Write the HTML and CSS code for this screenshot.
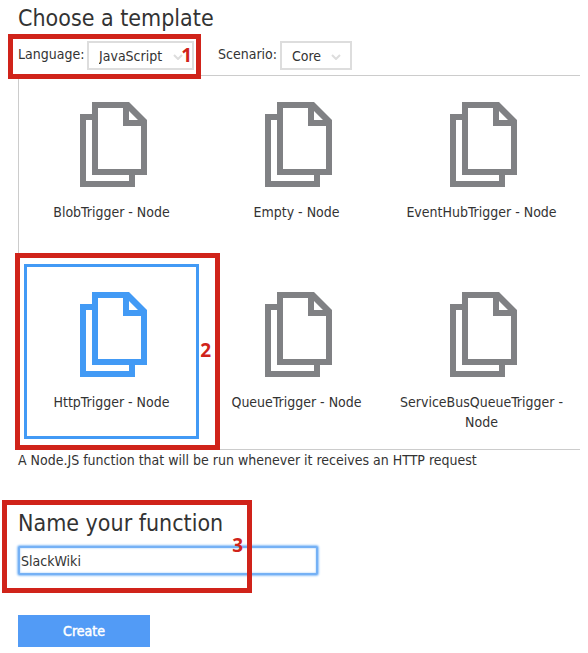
FILE: index.html
```html
<!DOCTYPE html>
<html lang="en">
<head>
<meta charset="utf-8">
<meta name="viewport" content="width=device-width, initial-scale=1">
<title>Choose a template</title>
<link rel="stylesheet" href="styles.css">
</head>
<body>
<svg class="sprite" aria-hidden="true">
  <symbol id="pages" viewBox="0 0 67 85">
    <path fill-rule="evenodd" d="M12 0H49L67 18V73H12ZM18 6V67H61V24H43V6ZM49 9V18H58Z"/>
    <path d="M0 12H12V18H6V79H49V73H55V85H0Z"/>
  </symbol>
</svg>
<main class="page">
  <h1 class="title">Choose a template</h1>
  <div class="filters">
    <div class="filter marked">
      <label for="language">Language:</label>
      <span class="picker picker-wide">
        <select id="language"><option>JavaScript</option></select>
        <svg class="chevron" viewBox="0 0 10 6" aria-hidden="true"><path d="M1 1l4 4 4-4"/></svg>
      </span>
      <span class="mark mark-language"><b class="step">1</b></span>
    </div>
    <div class="filter">
      <label for="scenario">Scenario:</label>
      <span class="picker">
        <select id="scenario"><option>Core</option></select>
        <svg class="chevron" viewBox="0 0 10 6" aria-hidden="true"><path d="M1 1l4 4 4-4"/></svg>
      </span>
    </div>
  </div>
  <div class="templates">
    <button type="button" class="tile"><svg class="icon" aria-hidden="true"><use href="#pages"/></svg><span>BlobTrigger - Node</span></button>
    <button type="button" class="tile"><svg class="icon" aria-hidden="true"><use href="#pages"/></svg><span>Empty - Node</span></button>
    <button type="button" class="tile"><svg class="icon" aria-hidden="true"><use href="#pages"/></svg><span>EventHubTrigger - Node</span></button>
    <div class="marked">
      <button type="button" class="tile selected"><svg class="icon" aria-hidden="true"><use href="#pages"/></svg><span>HttpTrigger - Node</span></button>
      <span class="mark mark-template"><b class="step">2</b></span>
    </div>
    <button type="button" class="tile"><svg class="icon" aria-hidden="true"><use href="#pages"/></svg><span>QueueTrigger - Node</span></button>
    <button type="button" class="tile"><svg class="icon" aria-hidden="true"><use href="#pages"/></svg><span>ServiceBusQueueTrigger - Node</span></button>
  </div>
  <p class="description">A Node.JS function that will be run whenever it receives an HTTP request</p>
  <div class="naming marked">
    <label class="title" for="name">Name your function</label>
    <input class="name" id="name" type="text" value="SlackWiki">
    <span class="mark mark-name"><b class="step">3</b></span>
  </div>
  <button type="button" class="create">Create</button>
</main>
</body>
</html>
```
FILE: styles.css
```css
* {
  box-sizing: border-box;
}

body {
  margin: 0;
  background: #fff;
  color: #333;
  font: 14px/20px "DejaVu Sans Condensed", "Noto Sans", sans-serif;
}

button,
input,
select {
  margin: 0;
  color: inherit;
  font: inherit;
}

.sprite {
  position: absolute;
  width: 0;
  height: 0;
}

.page {
  padding: 0 8px 0 18px;
}

.title {
  display: block;
  margin: 0;
  font-size: 23px;
  font-weight: 400;
  line-height: 36px;
}

.filters {
  display: flex;
  gap: 24px;
  padding: 5px 0;
}

.filter {
  display: flex;
  gap: 5px;
  line-height: 26px;
}

.filter label {
  width: 57px;
  white-space: nowrap;
}

.filter.marked label {
  width: 64px;
}

.marked {
  position: relative;
}

.picker {
  display: flex;
  position: relative;
  width: 72px;
}

.picker-wide {
  width: 107px;
}

.picker select {
  width: 100%;
  height: 29px;
  padding: 0 10px;
  appearance: none;
  border: 2px solid #ddd;
  border-radius: 0;
  background: #fff;
}

.chevron {
  position: absolute;
  top: 13px;
  right: 11px;
  width: 10px;
  height: 6px;
  fill: none;
  stroke: #ddd;
  stroke-width: 2;
  pointer-events: none;
}

.templates {
  display: grid;
  grid-template-columns: repeat(3, minmax(0, 175px));
  grid-template-rows: 173px 175px;
  gap: 15px 10px;
  padding: 0 0 10px 5px;
  border: solid #ccc;
  border-width: 1px 0 1px 1px;
}

.tile {
  display: flex;
  flex-direction: column;
  align-items: center;
  gap: 15px;
  width: 100%;
  height: 100%;
  padding: 28px 5px 0;
  border: 0;
  background: none;
}

.tile:nth-child(-n+3) {
  padding-top: 26px;
}

.tile.selected {
  padding: 25px 2px 0;
  border: 3px solid #429af5;
}

.icon {
  flex: none;
  width: 67px;
  height: 85px;
  margin-left: 4px;
  fill: #808184;
}

.selected .icon {
  fill: #429af5;
}

.description {
  margin: 0 0 35px;
}

.naming {
  display: flex;
  flex-direction: column;
  gap: 5px;
  margin-bottom: 40px;
}

.name {
  width: 300px;
  max-width: 100%;
  height: 29px;
  padding: 0 1px;
  border: 2px solid #75b1f5;
  border-radius: 2px;
  outline: 0;
  box-shadow: 0 0 2px 1px #8fc1f8, inset 0 0 2px #8fc1f8;
}

.create {
  width: 132px;
  height: 32px;
  border: 0;
  background: #529bf6;
  color: #fff;
  -webkit-text-stroke: 0.5px #fff;
}

.mark {
  position: absolute;
  border: 5px solid #d0231a;
  pointer-events: none;
}

.mark-language {
  inset: -7px -7px -9px -10px;
}

.mark-template {
  inset: -11px -21px -11px -9px;
}

.mark-name {
  top: -5px;
  bottom: -18px;
  left: -16px;
  width: 250px;
}

.step {
  position: absolute;
  right: 4px;
  color: #d0231a;
  font: 700 19px/20px "Noto Sans", sans-serif;
}

.mark-language .step {
  top: 6px;
}

.mark-template .step {
  top: 82px;
}

.mark-name .step {
  top: 30px;
}
```
